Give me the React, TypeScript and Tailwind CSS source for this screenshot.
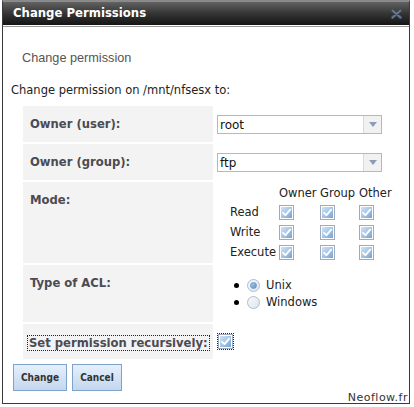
import React from "react";

const Check = () => (
  <span className="inline-flex w-[15px] h-[15px] border border-[#a0aabb] bg-white p-[1px] shrink-0">
    <span className="flex w-full h-full items-center justify-center bg-linear-to-br from-[#cfe3f6] via-[#a6c6e8] to-[#74a2d3]">
      <svg width="11" height="11" viewBox="0 0 11 11">
        <path d="M2 5.8 L4.5 8.2 L9.2 2.6" stroke="#ffffff" strokeWidth="1.8" fill="none" strokeLinecap="round" strokeLinejoin="round" />
      </svg>
    </span>
  </span>
);

const Radio = ({ checked }: { checked?: boolean }) => (
  <span className="inline-flex w-[13px] h-[13px] rounded-full border border-[#b2bac8] bg-linear-to-br from-[#f7f9fc] to-[#dfe6ef] items-center justify-center shrink-0">
    {checked && (
      <span className="w-[7px] h-[7px] rounded-full border border-[#6f97c4] bg-linear-to-br from-[#a9c9ea] to-[#6593c6]" />
    )}
  </span>
);

const Select = ({ value }: { value: string }) => (
  <div className="flex w-[165px] h-[19px] border border-[#b1b8c6] bg-white">
    <div className="flex-1 flex items-center pl-[2px] text-[12px] text-[#111] leading-none">{value}</div>
    <div className="w-[18px] h-full border-l border-[#d4d9e2] bg-[#f1f1f1] flex items-center justify-center">
      <svg width="8" height="5" viewBox="0 0 8 5">
        <polygon points="0,0 8,0 4,5" fill="#8d9cb6" />
      </svg>
    </div>
  </div>
);

const Label = ({ children }: { children: React.ReactNode }) => (
  <div className="bg-[#f3f3f3] pl-[7px] pt-[11px] font-bold text-[11.6px] leading-[14px] text-[#4b4b52]">{children}</div>
);

export default function App() {
  return (
    <div
      className="w-[414px] h-[407px] bg-white overflow-hidden"
      style={{ fontFamily: '"DejaVu Sans", Verdana, sans-serif' }}
    >
      <div className="relative ml-[2px] w-[408px] h-[404px] border border-[#3a3a3a] border-t-[2px] border-t-[#8a8a8a] bg-white flex flex-col">
        {/* title bar */}
        <div className="h-[23px] shrink-0 bg-linear-to-b from-[#626262] via-[#353535] to-[#151515] flex items-center justify-between pl-[10px] pr-[7px]">
          <span className="text-white font-bold text-[11.7px] leading-none">Change Permissions</span>
          <svg width="11" height="10" viewBox="0 0 11 10">
            <path d="M1.5 1.5 L9.5 8.5 M9.5 1.5 L1.5 8.5" stroke="#3f4d60" strokeWidth="3.2" strokeLinecap="round" />
            <path d="M1.5 1.5 L9.5 8.5 M9.5 1.5 L1.5 8.5" stroke="#6d7f97" strokeWidth="1.5" strokeLinecap="round" />
          </svg>
        </div>
        <div className="h-[1px] bg-white shrink-0" />
        <div className="h-[1px] bg-[#9a9a9a] shrink-0" />

        {/* body */}
        <div className="flex flex-col pl-[8px]">
          <div
            className="mt-[23px] ml-[11px] text-[12.7px] leading-[16px] text-[#555]"
            style={{ fontFamily: '"Liberation Sans", Arial, sans-serif' }}
          >
            Change permission
          </div>
          <div className="mt-[17px] text-[11.5px] leading-[14px] text-[#222]">
            Change permission on /mnt/nfsesx to:
          </div>

          <div className="mt-[9px] ml-[12px] grid grid-cols-[190px_1fr] gap-[2px] w-[377px]">
            {/* row 1 */}
            <div className="h-[36px] flex flex-col"><Label>Owner (user):</Label><div className="flex-1 bg-[#f3f3f3]" /></div>
            <div className="h-[36px] pl-[2px] pt-[9px]"><Select value="root" /></div>
            {/* row 2 */}
            <div className="h-[36px] flex flex-col"><Label>Owner (group):</Label><div className="flex-1 bg-[#f3f3f3]" /></div>
            <div className="h-[36px] pl-[2px] pt-[9px]"><Select value="ftp" /></div>
            {/* row 3 */}
            <div className="h-[81px] flex flex-col"><Label>Mode:</Label><div className="flex-1 bg-[#f3f3f3]" /></div>
            <div className="h-[81px] pl-[15px] pt-[2px] text-[11.5px] text-[#222]">
              <div className="grid grid-cols-[49px_41px_39px_auto] items-center">
                <div className="h-[18px]" />
                <div className="h-[18px] leading-[18px]">Owner</div>
                <div className="h-[18px] leading-[18px]">Group</div>
                <div className="h-[18px] leading-[18px]">Other</div>
                {["Read", "Write", "Execute"].map((r) => (
                  <React.Fragment key={r}>
                    <div className="h-[20px] leading-[20px]">{r}</div>
                    <div className="h-[20px] flex items-center"><Check /></div>
                    <div className="h-[20px] flex items-center"><Check /></div>
                    <div className="h-[20px] flex items-center"><Check /></div>
                  </React.Fragment>
                ))}
              </div>
            </div>
            {/* row 4 */}
            <div className="h-[57px] flex flex-col"><Label>Type of ACL:</Label><div className="flex-1 bg-[#f3f3f3]" /></div>
            <div className="h-[57px] pl-[19px] pt-[12px] text-[11.5px] text-[#222]">
              {[
                { t: "Unix", c: true },
                { t: "Windows", c: false },
              ].map((o) => (
                <div key={o.t} className="h-[17px] flex items-center">
                  <span className="w-[5px] h-[5px] rounded-full bg-black mr-[8px]" />
                  <Radio checked={o.c} />
                  <span className="ml-[6px] leading-[17px]">{o.t}</span>
                </div>
              ))}
            </div>
            {/* row 5 */}
            <div className="h-[35px] bg-[#f3f3f3] pl-[5px] flex items-center pt-[2px]">
              <span className="outline-1 outline-dotted outline-[#222] px-[1px] font-bold text-[11.6px] leading-[14px] text-[#4b4b52]">
                Set permission recursively:
              </span>
            </div>
            <div className="h-[35px] pl-[3px] flex items-center pb-[1px]">
              <span className="outline-1 outline-dotted outline-[#222] inline-flex">
                <Check />
              </span>
            </div>
          </div>

          {/* buttons */}
          <div className="mt-[5px] ml-[2px] flex gap-[5px]">
            {["Change", "Cancel"].map((b, i) => (
              <div
                key={b}
                className={`${i === 0 ? "w-[54px]" : "w-[50px]"} h-[27px] border border-[#7fa2c8] bg-linear-to-b from-[#e6f0fb] to-[#c2d7ee] flex items-center justify-center font-bold text-[10px] text-[#333]`}
                style={{ fontFamily: '"DejaVu Sans Condensed", "Liberation Sans", sans-serif' }}
              >
                {b}
              </div>
            ))}
          </div>
        </div>

        {/* watermark */}
        <div className="absolute right-[1px] bottom-[-1px] text-[11px] leading-[12px] tracking-[0.5px] text-[#333]">
          Neoflow.fr
        </div>
      </div>
    </div>
  );
}
